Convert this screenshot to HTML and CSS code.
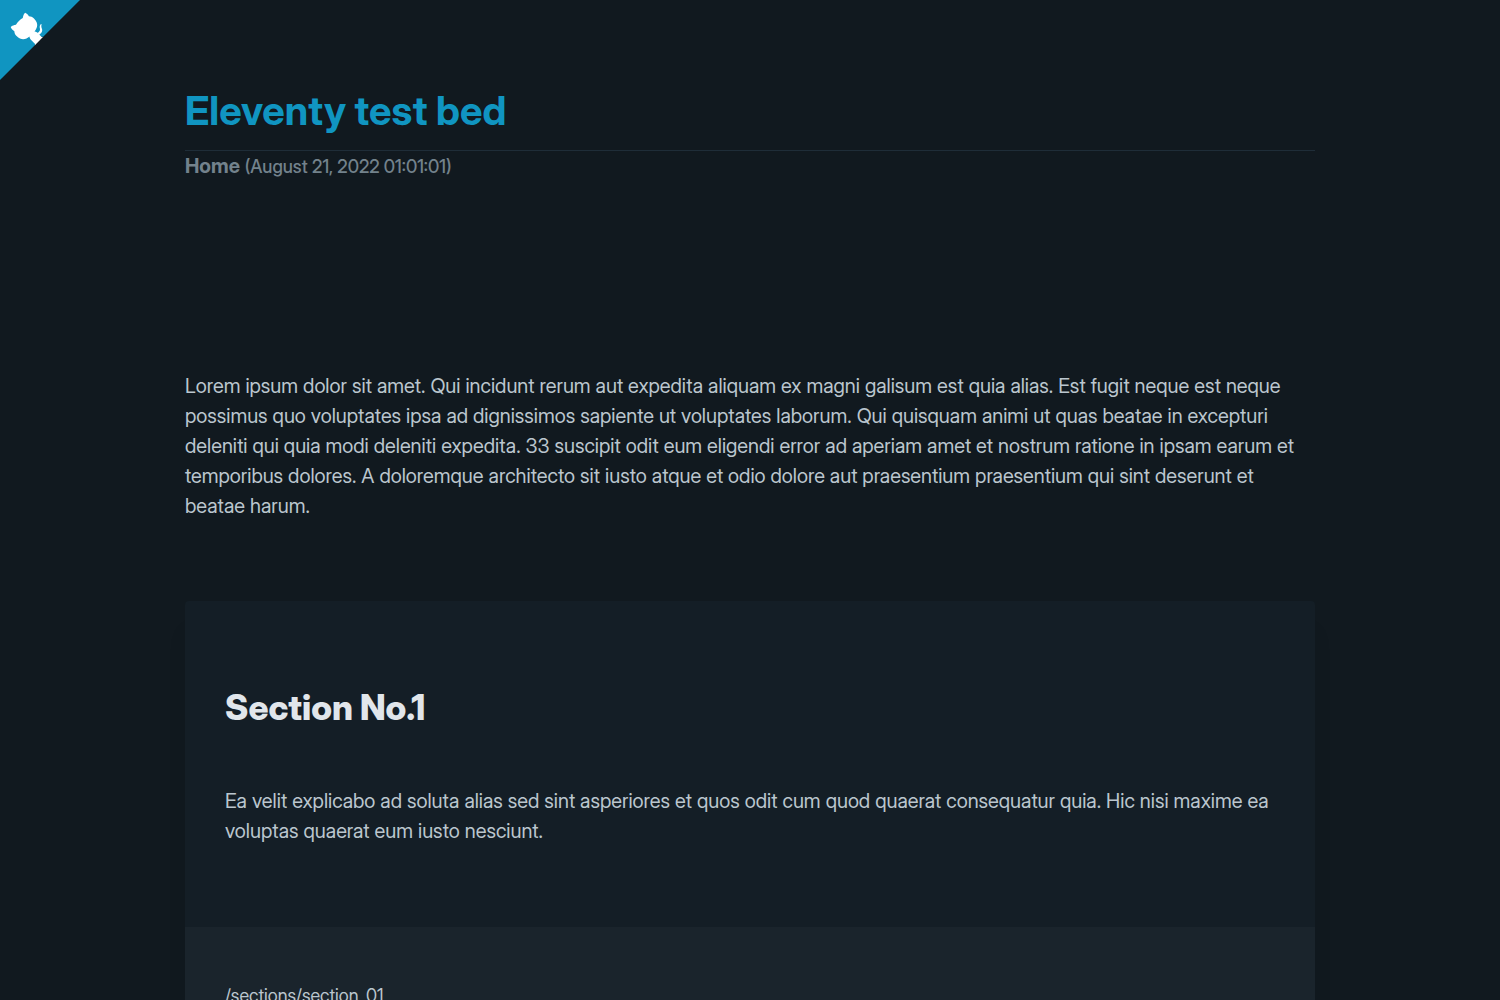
FILE: index.html
```html
<!DOCTYPE html>
<html lang="en">
<head>
<meta charset="utf-8">
<meta name="viewport" content="width=device-width, initial-scale=1">
<title>Eleventy test bed</title>
<link rel="stylesheet" href="styles.css">
</head>
<body>
<a class="github-corner" href="#" aria-label="View source on GitHub">
<svg width="80" height="80" viewBox="0 0 250 250" aria-hidden="true">
<path d="M0 0L115 115L130 115L142 142L250 250L250 0Z" fill="#1095c1"/>
<path d="M128.3 109C113.8 99.7 119 89.6 119 89.6C122 82.7 120.5 78.6 120.5 78.6C119.2 72 123.4 76.3 123.4 76.3C127.3 80.9 125.5 87.3 125.5 87.3C122.9 97.6 130.6 101.9 134.4 103.2" fill="#fff"/>
<path d="M115 115C114.9 115.1 118.7 116.5 119.8 115.4L133.7 101.6C136.9 99.2 139.9 98.4 142.2 98.6C133.8 88 127.5 74.4 143.8 58C148.5 53.4 154 51.2 159.7 51C160.3 49.4 163.2 43.6 171.4 40.1C171.4 40.1 176.1 42.5 178.8 56.2C183.1 58.6 187.2 61.8 190.9 65.4C194.5 69 197.7 73.2 200.1 77.6C213.8 80.2 216.3 84.9 216.3 84.9C212.7 93.1 206.9 96 205.4 96.6C205.1 102.4 203 107.8 198.3 112.5C181.9 128.9 168.3 122.5 157.7 114.1C157.9 116.9 156.7 120.9 152.7 124.9L141 136.5C139.8 137.7 141.6 141.9 141.8 141.8Z" fill="#fff"/>
</svg>
</a>
<header class="container page-header">
<h1>Eleventy test bed</h1>
<p class="subtitle"><strong>Home</strong> <small>(August 21, 2022 01:01:01)</small></p>
</header>
<main class="container">
<p class="intro">Lorem ipsum dolor sit amet. Qui incidunt rerum aut expedita aliquam ex magni galisum est quia alias. Est fugit neque est neque possimus quo voluptates ipsa ad dignissimos sapiente ut voluptates laborum. Qui quisquam animi ut quas beatae in excepturi deleniti qui quia modi deleniti expedita. 33 suscipit odit eum eligendi error ad aperiam amet et nostrum ratione in ipsam earum et temporibus dolores. A doloremque architecto sit iusto atque et odio dolore aut praesentium praesentium qui sint deserunt et beatae harum.</p>
<article class="card">
<h2>Section No.1</h2>
<p>Ea velit explicabo ad soluta alias sed sint asperiores et quos odit cum quod quaerat consequatur quia. Hic nisi maxime ea voluptas quaerat eum iusto nesciunt.</p>
<footer><small>/sections/section_01</small></footer>
</article>
</main>
</body>
</html>
```
FILE: styles.css
```css
* { box-sizing: border-box; }
body {
  margin: 0;
  background: #11191f;
  color: #bbc6ce;
  font: 400 20px/30px "Inter Display", Inter, sans-serif;
}
.github-corner { position: absolute; top: 0; left: 0; }
.github-corner svg { display: block; transform: scale(-1, 1); }
.container { width: 100%; max-width: 1130px; margin: 0 auto; }
h1, h2, p { margin: 0; }
.page-header { padding: 80px 0; }
h1 {
  padding: 6px 0 14px;
  border-bottom: 1px solid #1f2d38;
  color: #1095c1;
  font-size: 40px;
  line-height: 50px;
  font-weight: 700;
}
.subtitle { color: #73828c; font-weight: 500; }
small { font-size: 18px; }
.intro { margin-top: 109px; }
.card {
  margin-top: 80px;
  padding: 80px 40px;
  border-radius: 4px;
  background: #141e26;
  box-shadow: 0 30px 20px rgba(0, 0, 0, .06);
}
h2 { margin-bottom: 52px; color: #e1e6eb; font-size: 35px; line-height: 53px; font-weight: 800; }
.card footer {
  margin: 81px -40px -80px;
  padding: 53px 40px;
  border-radius: 0 0 4px 4px;
  background: #1a242c;
}
```
